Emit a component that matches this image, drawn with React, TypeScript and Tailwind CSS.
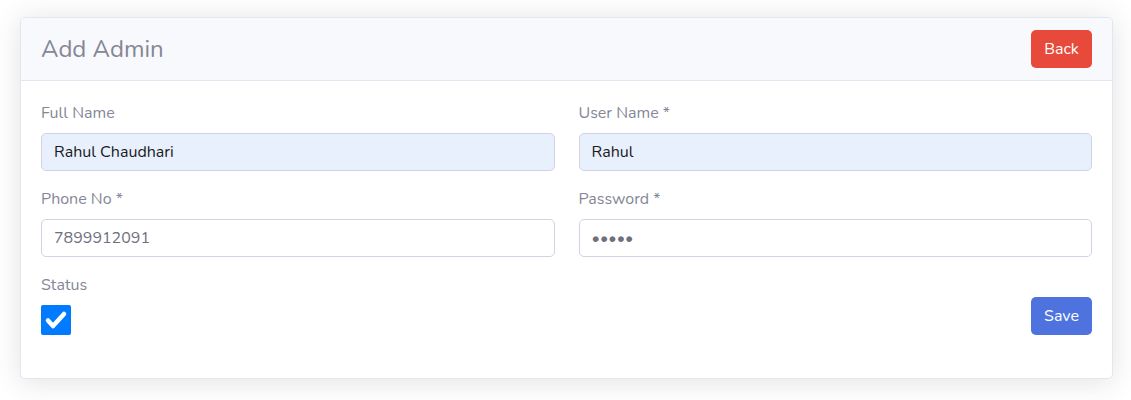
import React, { useState } from 'react';

const font = { fontFamily: 'Nunito, Lato, "Noto Sans", sans-serif' };

const Field: React.FC<{
  label: string;
  value: string;
  type?: string;
  filled?: boolean;
}> = ({ label, value, type = 'text', filled }) => (
  <div className="flex flex-col">
    <label className="mb-2 text-[16px] leading-6 text-[#858796]">{label}</label>
    <input
      type={type}
      defaultValue={value}
      className={`h-[38px] w-full rounded-[5px] border border-[#d1d3e2] px-3 text-[16px] outline-none ${
        filled ? 'bg-[#e8f0fe] text-[#1a1a1a]' : 'bg-white text-[#6e707e]'
      }`}
    />
  </div>
);

const App: React.FC = () => {
  const [status, setStatus] = useState(true);

  return (
    <div className="min-h-[400px] bg-white pt-[17px]" style={font}>
      <div className="ml-5 w-[1093px] overflow-hidden rounded-[5px] border border-[#e3e6f0] bg-white shadow-[0_0.15rem_1.75rem_0_rgba(58,59,69,0.15)]">
        {/* Header */}
        <div className="flex h-[63px] items-center justify-between border-b border-[#e3e6f0] bg-[#f8f9fc] px-5">
          <h4 className="text-[24px] font-normal text-[#858796]">Add Admin</h4>
          <button className="h-[38px] w-[61px] rounded-[5px] bg-[#e74a3b] text-[16px] text-white">
            Back
          </button>
        </div>

        {/* Body */}
        <div className="px-5 pt-5 pb-[43px]">
          <div className="grid grid-cols-2 gap-x-6 gap-y-4">
            <Field label="Full Name" value="Rahul Chaudhari" filled />
            <Field label="User Name *" value="Rahul" filled />
            <Field label="Phone No *" value="7899912091" />
            <Field label="Password *" value="12345" type="password" />
          </div>

          <div className="mt-4 flex items-end justify-between">
            <div className="flex flex-col">
              <label className="mb-2 text-[16px] leading-6 text-[#858796]">Status</label>
              <button
                onClick={() => setStatus(!status)}
                className={`flex h-[30px] w-[30px] items-center justify-center rounded-[2px] ${
                  status ? 'bg-[#007bff]' : 'border border-[#767676] bg-white'
                }`}
              >
                {status && (
                  <svg width="24" height="24" viewBox="0 0 24 24">
                    <path d="M4 12.5l5 5.5 11-12" fill="none" stroke="white" strokeWidth="4.5" strokeLinecap="round" strokeLinejoin="round" />
                  </svg>
                )}
              </button>
            </div>
            <button className="h-[38px] w-[61px] rounded-[5px] bg-[#4e73df] text-[16px] text-white">
              Save
            </button>
          </div>
        </div>
      </div>
    </div>
  );
};

export default App;
